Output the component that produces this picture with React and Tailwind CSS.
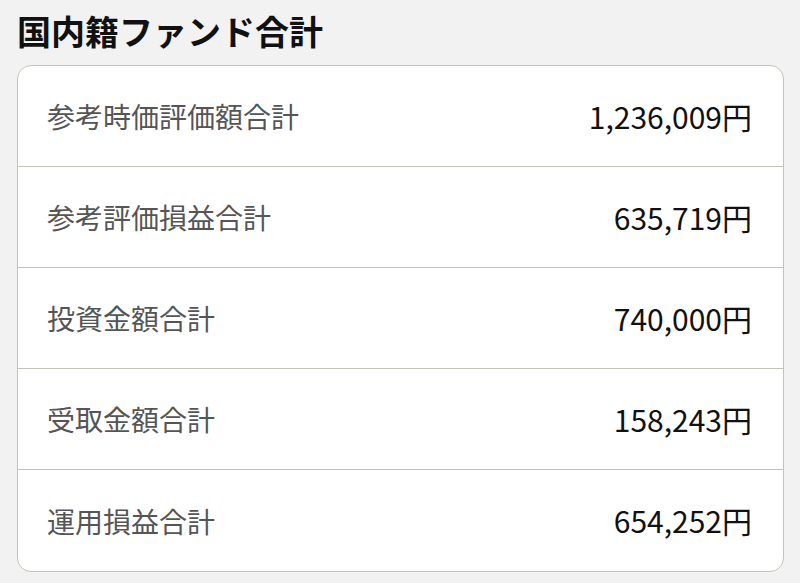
export default function App() {
  const rows = [
    ["参考時価評価額合計", "1,236,009円"],
    ["参考評価損益合計", "635,719円"],
    ["投資金額合計", "740,000円"],
    ["受取金額合計", "158,243円"],
    ["運用損益合計", "654,252円"],
  ];
  return (
    <div
      className="w-[800px] h-[583px] bg-[#f2f2f2] px-[17px] pt-[9px] overflow-hidden"
      style={{ fontFamily: '"Noto Sans CJK JP", "Noto Sans", sans-serif' }}
    >
      <h1 className="text-[34px] font-bold leading-[44px] text-[#111]">国内籍ファンド合計</h1>
      <div className="mt-[12px] w-[767px] bg-white border border-[#c5c3b6] rounded-[14px] overflow-hidden">
        {rows.map(([k, v], i) => (
          <div
            key={k}
            className={`flex items-center justify-between h-[101px] pl-[29px] pr-[31px] ${i < rows.length - 1 ? "border-b border-[#c5c3b6]" : ""}`}
          >
            <span className="text-[28px] text-[#555]">{k}</span>
            <span className="text-[30px] text-[#111]">{v}</span>
          </div>
        ))}
      </div>
    </div>
  );
}
